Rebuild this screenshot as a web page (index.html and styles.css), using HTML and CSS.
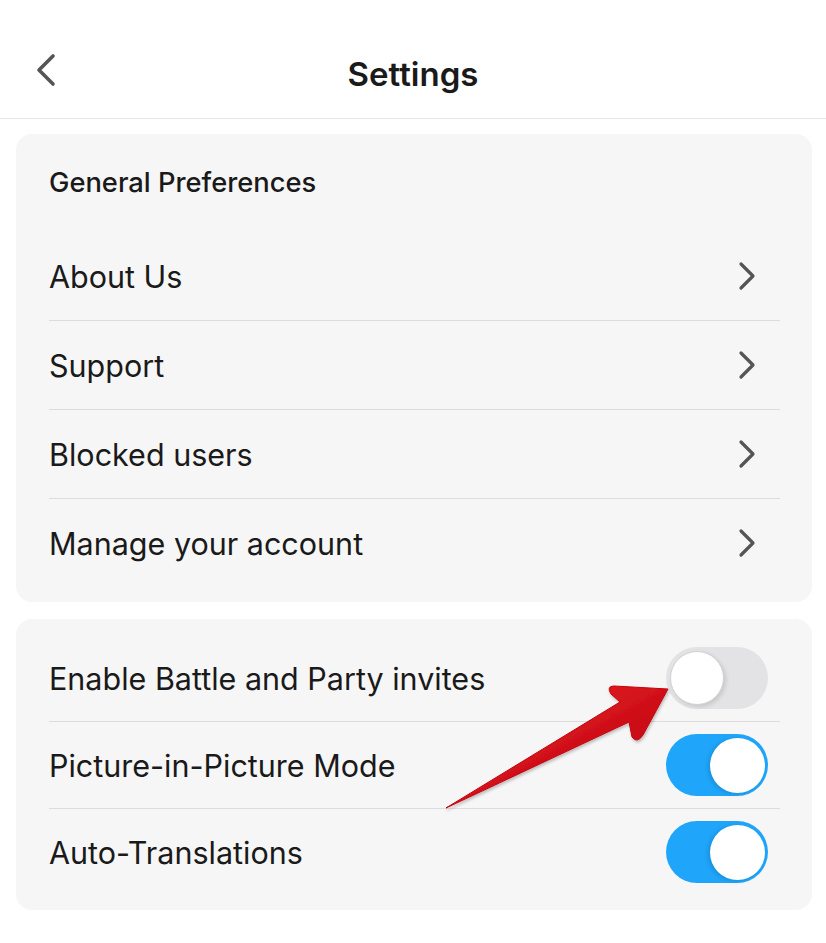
FILE: index.html
```html
<!DOCTYPE html>
<html lang="en">
<head>
  <meta charset="UTF-8" />
  <meta name="viewport" content="width=device-width, initial-scale=1.0" />
  <title>Settings</title>
  <link rel="stylesheet" href="styles.css">
</head>
<body>

  <header class="topbar">
    <button class="back" aria-label="Back">
      <svg width="24" height="36" viewBox="0 0 24 36">
        <path d="M19 4 L5 18 L19 32" fill="none" stroke="#555" stroke-width="3.6" stroke-linecap="round" stroke-linejoin="round" />
      </svg>
    </button>
    <h1>Settings</h1>
  </header>

  <main class="content">

    <section class="card">
      <div class="card-title">General Preferences</div>

      <div class="row">
        <span>About Us</span>
        <svg class="chev" width="20" height="30" viewBox="0 0 20 30">
          <path d="M4 3 L16 15 L4 27" fill="none" stroke="#555" stroke-width="3.2" stroke-linecap="round" stroke-linejoin="round" />
        </svg>
      </div>
      <div class="row">
        <span>Support</span>
        <svg class="chev" width="20" height="30" viewBox="0 0 20 30">
          <path d="M4 3 L16 15 L4 27" fill="none" stroke="#555" stroke-width="3.2" stroke-linecap="round" stroke-linejoin="round" />
        </svg>
      </div>
      <div class="row">
        <span>Blocked users</span>
        <svg class="chev" width="20" height="30" viewBox="0 0 20 30">
          <path d="M4 3 L16 15 L4 27" fill="none" stroke="#555" stroke-width="3.2" stroke-linecap="round" stroke-linejoin="round" />
        </svg>
      </div>
      <div class="row">
        <span>Manage your account</span>
        <svg class="chev" width="20" height="30" viewBox="0 0 20 30">
          <path d="M4 3 L16 15 L4 27" fill="none" stroke="#555" stroke-width="3.2" stroke-linecap="round" stroke-linejoin="round" />
        </svg>
      </div>
    </section>

    <section class="card card-toggles">
      <div class="row row-toggle">
        <span>Enable Battle and Party invites</span>
        <div class="switch"><div class="knob"></div></div>
      </div>
      <div class="row row-toggle">
        <span>Picture-in-Picture Mode</span>
        <div class="switch on"><div class="knob"></div></div>
      </div>
      <div class="row row-toggle">
        <span>Auto-Translations</span>
        <div class="switch on"><div class="knob"></div></div>
      </div>
    </section>

  </main>

  <!-- annotation arrow drawn over the screenshot -->
  <svg class="annotation" width="826" height="943" viewBox="0 0 826 943">
    <defs>
      <linearGradient id="redArrow" x1="0" y1="0" x2="1" y2="1">
        <stop offset="0" stop-color="#f0232a" />
        <stop offset="1" stop-color="#b3000a" />
      </linearGradient>
      <filter id="arrowShadow" x="-10%" y="-10%" width="130%" height="130%">
        <feDropShadow dx="1" dy="2" stdDeviation="1.5" flood-color="#000" flood-opacity="0.25" />
      </filter>
    </defs>
    <path d="M446 808 L620 702 L611 694 Q606 686 614 686 L668 689 L643 735 Q637 744 632 737 L629 722 Z"
          fill="url(#redArrow)" filter="url(#arrowShadow)" stroke="#c8050e" stroke-width="1" stroke-linejoin="round" />
  </svg>

</body>
</html>
```

FILE: styles.css
```css
body {
  margin: 0;
  background: #fff;
  font-family: 'Inter', 'Noto Sans', sans-serif;
  color: #1a1a1a;
}

.topbar {
  height: 119px;
  box-sizing: border-box;
  padding-top: 30px;
  border-bottom: 1px solid #e6e6e6;
  display: flex;
  align-items: center;
  justify-content: center;
  position: relative;
}

.topbar h1 {
  margin: 0;
  font-size: 33px;
  font-weight: 600;
}

.back {
  position: absolute;
  left: 34px;
  top: 52px;
  padding: 0;
  border: 0;
  background: none;
}

.back svg {
  display: block;
}

.content {
  padding: 15px 14px 0 16px;
  display: flex;
  flex-direction: column;
  gap: 17px;
}

.card {
  background: #f6f6f6;
  border-radius: 16px;
  padding: 16px 32px 15px 33px;
}

.card-title {
  height: 82px;
  box-sizing: border-box;
  padding-top: 16px;
  font-size: 27.3px;
  font-weight: 500;
}

.row {
  height: 88px;
  display: flex;
  align-items: center;
  justify-content: space-between;
  font-size: 30.5px;
  border-top: 1px solid #dcdcdc;
}

.card-title + .row {
  border-top: 0;
}

.row-toggle {
  height: 86px;
}

.row-toggle:first-child {
  border-top: 0;
}

.chev {
  margin-right: 23px;
}

.switch {
  width: 102px;
  height: 62px;
  border-radius: 31px;
  background: #e3e3e6;
  margin-right: 12px;
  box-sizing: border-box;
  padding: 4px;
  display: flex;
}

.knob {
  width: 54px;
  height: 54px;
  border-radius: 50%;
  background: #fff;
  box-sizing: border-box;
  border: 1.5px solid #d2d2d4;
  box-shadow: 2px 2px 4px rgba(0, 0, 0, 0.12);
}

.switch.on {
  background: #1fa6fb;
  justify-content: flex-end;
  padding: 4px 3px;
}

.switch.on .knob {
  border: 0;
  width: 55px;
  height: 55px;
  margin-top: -0.5px;
  box-shadow: -2px 1px 5px rgba(0, 0, 0, 0.15);
}

.annotation {
  position: absolute;
  left: 0;
  top: 0;
  pointer-events: none;
}
```
